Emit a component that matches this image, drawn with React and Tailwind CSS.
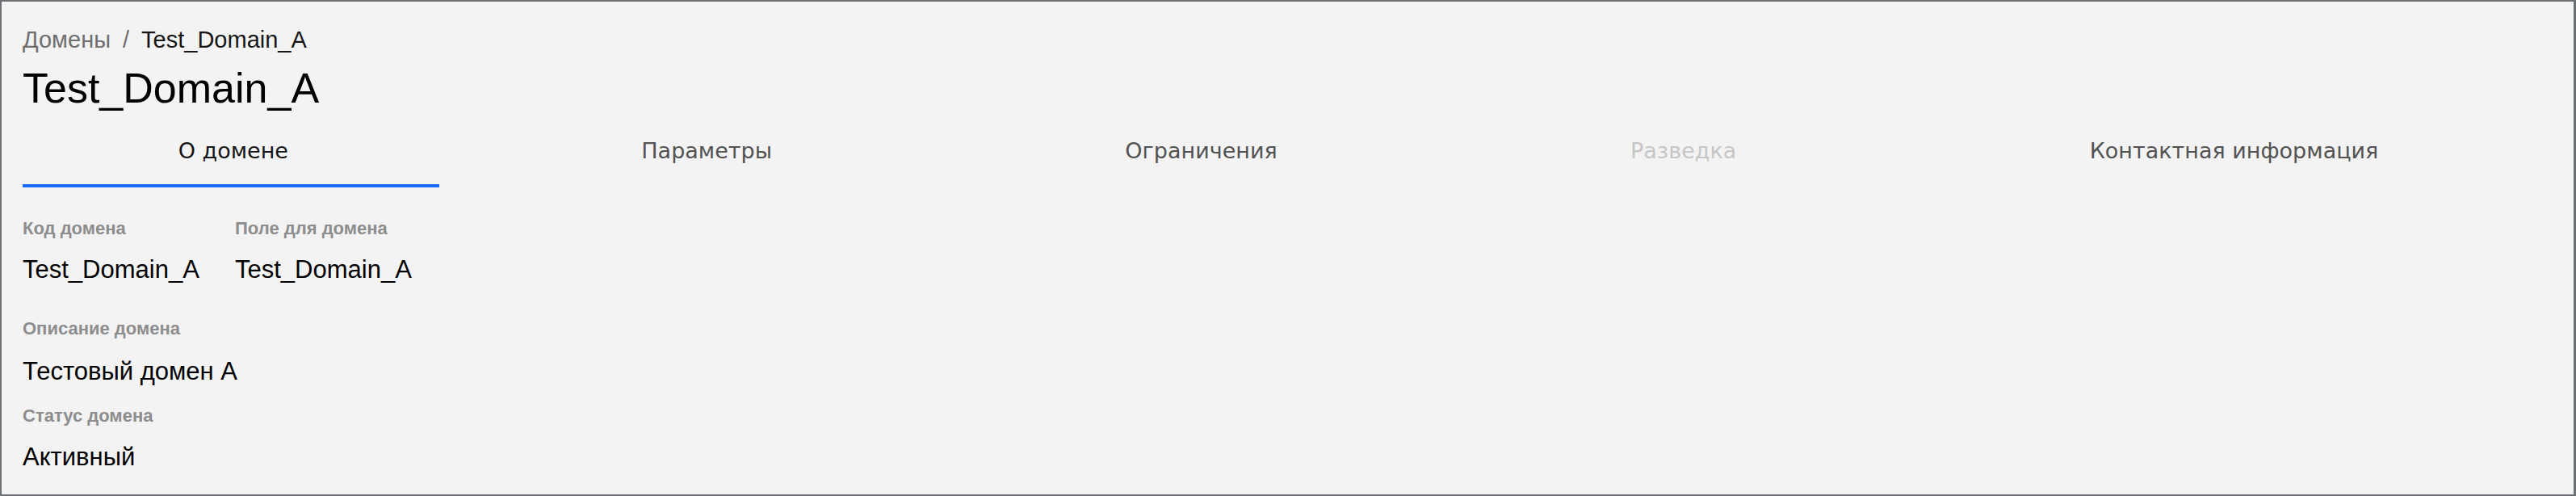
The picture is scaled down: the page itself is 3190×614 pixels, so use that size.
import React from "react";

const tabs = [
  { label: "О домене", state: "active" },
  { label: "Параметры", state: "normal" },
  { label: "Ограничения", state: "normal" },
  { label: "Разведка", state: "disabled" },
  { label: "Контактная информация", state: "normal" },
];

function Field({ label, value, gap = "gap-[16px]", className = "" }) {
  return (
    <div className={`flex flex-col ${gap} ${className}`}>
      <div className="text-[22px] leading-[30px] font-bold text-[#8d8d8d] whitespace-nowrap">{label}</div>
      <div className="text-[31px] leading-[40px] text-black whitespace-nowrap">{value}</div>
    </div>
  );
}

export default function App() {
  return (
    <div
      className="h-[614px] w-full box-border border-2 border-r-[3px] border-[#6c7075] bg-[#f3f3f3] pl-[26px] pt-[27px] overflow-hidden"
      style={{ fontFamily: '"Liberation Sans", Arial, sans-serif' }}
    >
      <nav className="flex items-center text-[29px] leading-[40px]">
        <span className="text-[#6f6f6f]">Домены</span>
        <span className="mx-[15px] text-[#6f6f6f]">/</span>
        <span className="text-[#161616]">Test_Domain_A</span>
      </nav>
      <h1 className="mt-[10px] text-[52px] leading-[60px] font-normal text-black">Test_Domain_A</h1>

      <div
        className="relative -ml-[26px] flex w-[3162px]"
        style={{ fontFamily: '"DejaVu Sans", sans-serif' }}
      >
        {tabs.map((t) => (
          <div
            key={t.label}
            className={`flex-auto pt-[28px] pb-[25px] text-center text-[27px] leading-[40px] whitespace-nowrap ${
              t.state === "active"
                ? "text-[#161616]"
                : t.state === "disabled"
                ? "text-[#c6c6c6]"
                : "text-[#525252]"
            }`}
          >
            {t.label}
          </div>
        ))}
        <span className="absolute bottom-0 left-[26px] h-[4px] w-[516px] bg-[#1a6cff]" />
      </div>

      <div className="mt-[36px] flex">
        <Field className="w-[263px]" label="Код домена" value="Test_Domain_A" />
        <Field label="Поле для домена" value="Test_Domain_A" />
      </div>
      <Field className="mt-[38px]" gap="gap-[18px]" label="Описание домена" value="Тестовый домен А" />
      <Field className="mt-[20px]" label="Статус домена" value="Активный" />
    </div>
  );
}
